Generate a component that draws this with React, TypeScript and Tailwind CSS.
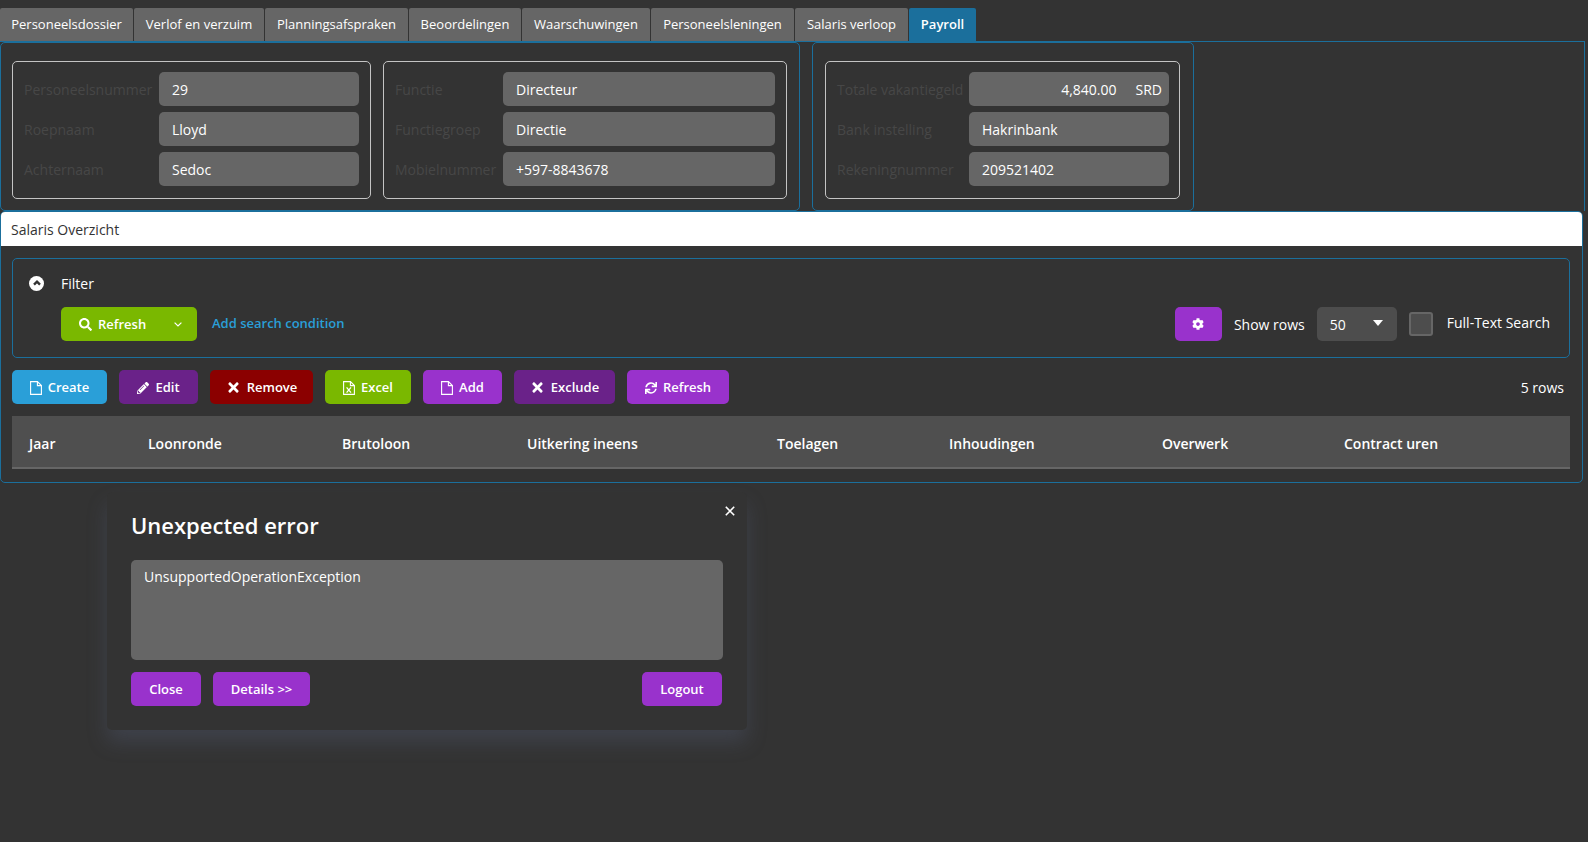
import { FaCog, FaPencilAlt, FaSearch, FaSync, FaTimes } from 'react-icons/fa'
import type { ReactNode } from 'react'

const tabs = [
  { label: 'Personeelsdossier', w: 'w-[133px]' },
  { label: 'Verlof en verzuim', w: 'w-[130px]' },
  { label: 'Planningsafspraken', w: 'w-[143px]' },
  { label: 'Beoordelingen', w: 'w-[112px]' },
  { label: 'Waarschuwingen', w: 'w-[128px]' },
  { label: 'Personeelsleningen', w: 'w-[143px]' },
  { label: 'Salaris verloop', w: 'w-[113px]' },
]

const columns = [
  { label: 'Jaar', w: 'w-[119px]' },
  { label: 'Loonronde', w: 'w-[194px]' },
  { label: 'Brutoloon', w: 'w-[185px]' },
  { label: 'Uitkering ineens', w: 'w-[250px]' },
  { label: 'Toelagen', w: 'w-[172px]' },
  { label: 'Inhoudingen', w: 'w-[213px]' },
  { label: 'Overwerk', w: 'w-[182px]' },
  { label: 'Contract uren', w: 'w-auto' },
]

function FileIcon() {
  return (
    <svg viewBox="0 0 12 14" className="h-[14px] w-[12px]" fill="none" stroke="#ffffff" strokeWidth="1.1">
      <path d="M.6.6H7.4L11.4 4.6V13.4H.6Z" />
      <path d="M7.4.6V4.6H11.4" />
    </svg>
  )
}

function ExcelIcon() {
  return (
    <svg viewBox="0 0 12 14" className="h-[14px] w-[12px]" fill="none" stroke="#ffffff" strokeWidth="1.1">
      <path d="M.6.6H7.4L11.4 4.6V13.4H.6Z" />
      <path d="M7.4.6V4.6H11.4" />
      <path d="M3.6 6.4 8 11.6M8 6.4 3.6 11.6" strokeWidth="1.3" />
    </svg>
  )
}

function Field({ label, labelW, inputW, children }: { label: string; labelW: string; inputW: string; children: ReactNode }) {
  return (
    <div className="flex h-[34px] items-center">
      <span className={`${labelW} shrink-0 whitespace-nowrap text-[14px] text-[#474747]`}>{label}</span>
      <div className={`${inputW} flex h-[34px] items-center rounded-[5px] bg-[#666666] px-[13px] text-[14px] text-white`}>{children}</div>
    </div>
  )
}

function Box({ w, children }: { w: string; children: ReactNode }) {
  return (
    <div className={`${w} flex h-[138px] flex-col gap-[6px] rounded-[5px] border border-[#c4c4c4] pl-[11px] pt-[10px]`}>{children}</div>
  )
}

function Btn({ w, color, icon, children }: { w: string; color: string; icon?: ReactNode; children: ReactNode }) {
  return (
    <button className={`${w} ${color} flex h-[34px] items-center justify-center gap-[6px] rounded-[5px] pt-px text-[13px] font-semibold text-white`}>
      {icon}
      {children}
    </button>
  )
}

export default function App() {
  return (
    <div className="relative h-[842px] w-[1588px] overflow-hidden bg-[#333333] font-['Open_Sans',sans-serif] text-white">
      {/* tabs */}
      <div className="flex gap-px pt-2">
        {tabs.map(t => (
          <div key={t.label} className={`${t.w} flex h-[33px] items-center justify-center rounded-t-[2px] bg-[#666666] text-[13px]`}>{t.label}</div>
        ))}
        <div className="flex h-[33px] w-[67px] items-center justify-center rounded-t-[2px] bg-[#1b6f9c] text-[13px] font-semibold">Payroll</div>
      </div>

      {/* tab content */}
      <div className="h-[170px] w-[1585px] border-r border-t border-[#1b6f9c]">
        <div className="flex gap-3">
          <div className="flex h-[169px] w-[800px] gap-3 rounded-[5px] border border-[#1b6f9c] pl-[11px] pt-[18px]">
            <Box w="w-[359px]">
              <Field label="Personeelsnummer" labelW="w-[135px]" inputW="w-[200px]">29</Field>
              <Field label="Roepnaam" labelW="w-[135px]" inputW="w-[200px]">Lloyd</Field>
              <Field label="Achternaam" labelW="w-[135px]" inputW="w-[200px]">Sedoc</Field>
            </Box>
            <Box w="w-[404px]">
              <Field label="Functie" labelW="w-[108px]" inputW="w-[272px]">Directeur</Field>
              <Field label="Functiegroep" labelW="w-[108px]" inputW="w-[272px]">Directie</Field>
              <Field label="Mobielnummer" labelW="w-[108px]" inputW="w-[272px]">+597-8843678</Field>
            </Box>
          </div>
          <div className="h-[169px] w-[382px] rounded-[5px] border border-[#1b6f9c] pl-[12px] pt-[18px]">
            <Box w="w-[355px]">
              <Field label="Totale vakantiegeld" labelW="w-[132px]" inputW="w-[200px]">
                <span className="ml-auto">4,840.00</span>
                <span className="ml-[19px] mr-[-6px]">SRD</span>
              </Field>
              <Field label="Bank instelling" labelW="w-[132px]" inputW="w-[200px]">Hakrinbank</Field>
              <Field label="Rekeningnummer" labelW="w-[132px]" inputW="w-[200px]">209521402</Field>
            </Box>
          </div>
        </div>
      </div>

      {/* salaris panel */}
      <div className="h-[272px] w-[1583px] rounded-[5px] border border-[#1b6f9c]">
        <div className="flex h-[34px] items-center rounded-t-[4px] bg-white pl-[10px] text-[14px] text-[#333333]">Salaris Overzicht</div>
        <div className="px-[11px] pt-3">
          <div className="h-[100px] w-[1558px] rounded-[5px] border border-[#1b6f9c]">
            <div className="flex h-[48px] items-center">
              <span className="ml-4 flex h-[15px] w-[15px] items-center justify-center rounded-full bg-white">
                <svg viewBox="0 0 10 10" className="h-[10px] w-[10px]"><path d="M2 6.6 5 3.6 8 6.6" fill="none" stroke="#333333" strokeWidth="2.4" /></svg>
              </span>
              <span className="ml-[17px] text-[14px]">Filter</span>
            </div>
            <div className="flex items-center pl-12">
              <button className="flex h-[34px] w-[136px] items-center rounded-[5px] bg-[#7ab800] pl-[18px] pt-px text-[13px] font-semibold">
                <FaSearch className="mr-[6px] text-[13px]" />
                Refresh
                <svg viewBox="0 0 8 5" className="ml-[28px] h-[5px] w-[8px]"><path d="M.6.6 4 4 7.4.6" fill="none" stroke="#ffffff" strokeWidth="1.2" /></svg>
              </button>
              <span className="ml-[15px] text-[13px] font-semibold text-[#2a9fd8]">Add search condition</span>
              <button className="ml-auto flex h-[34px] w-[47px] items-center justify-center rounded-[5px] bg-[#9932cc]">
                <FaCog className="text-[12px]" />
              </button>
              <span className="ml-3 text-[14px]">Show rows</span>
              <div className="relative ml-3 flex h-[34px] w-[80px] items-center rounded-[5px] bg-[#4d4d4d] pl-[13px] text-[14px]">
                50
                <svg viewBox="0 0 10 6" className="absolute right-[14px] top-[13px] h-[6px] w-[10px]"><path d="M0 0H10L5 6Z" fill="#ffffff" /></svg>
              </div>
              <span className="ml-3 h-6 w-6 rounded-[3px] border-2 border-[#666666] bg-[#4d4d4d]" />
              <span className="ml-[14px] mr-[19px] mt-[-3px] text-[14px]">Full-Text Search</span>
            </div>
          </div>

          <div className="mt-3 flex items-center gap-3">
            <Btn w="w-[95px]" color="bg-[#2a9fd8]" icon={<FileIcon />}>Create</Btn>
            <Btn w="w-[79px]" color="bg-[#6a2289]" icon={<FaPencilAlt className="text-[12px]" />}>Edit</Btn>
            <Btn w="w-[103px]" color="bg-[#8b0000]" icon={<FaTimes className="text-[15px]" />}>Remove</Btn>
            <Btn w="w-[86px]" color="bg-[#7ab800]" icon={<ExcelIcon />}>Excel</Btn>
            <Btn w="w-[79px]" color="bg-[#9932cc]" icon={<FileIcon />}>Add</Btn>
            <Btn w="w-[101px]" color="bg-[#6a2289]" icon={<FaTimes className="text-[15px]" />}>Exclude</Btn>
            <Btn w="w-[102px]" color="bg-[#9932cc]" icon={<FaSync className="text-[12px]" />}>Refresh</Btn>
            <span className="ml-auto mr-[7px] text-[14px]">5 rows</span>
          </div>

          <div className="mt-3 flex h-[53px] w-[1558px] items-center border-b-2 border-[#666666] bg-[#4f4f4f] pl-[17px] pt-[3px] text-[14px] font-semibold">
            {columns.map(c => (
              <span key={c.label} className={`${c.w} shrink-0`}>{c.label}</span>
            ))}
          </div>
        </div>
      </div>

      {/* error dialog */}
      <div className="absolute left-[107px] top-[492px] h-[238px] w-[640px] rounded-[5px] bg-[#333333] px-6 shadow-[0_12px_20px_rgba(90,100,130,0.3)]">
        <svg viewBox="0 0 10 10" className="absolute right-[12px] top-[14px] h-[10px] w-[10px]"><path d="M.8.8 9.2 9.2M9.2.8.8 9.2" fill="none" stroke="#ffffff" strokeWidth="1.6" /></svg>
        <h2 className="mt-[18px] text-[22px] font-semibold leading-[30px]">Unexpected error</h2>
        <div className="mt-[20px] h-[100px] w-[592px] rounded-[5px] bg-[#666666] px-[13px] py-[6px] text-[14px]">UnsupportedOperationException</div>
        <div className="mt-3 flex w-[591px] gap-3">
          <Btn w="w-[70px]" color="bg-[#9932cc]">Close</Btn>
          <Btn w="w-[97px]" color="bg-[#9932cc]">{'Details >>'}</Btn>
          <div className="ml-auto">
            <Btn w="w-[80px]" color="bg-[#9932cc]">Logout</Btn>
          </div>
        </div>
      </div>
    </div>
  )
}
